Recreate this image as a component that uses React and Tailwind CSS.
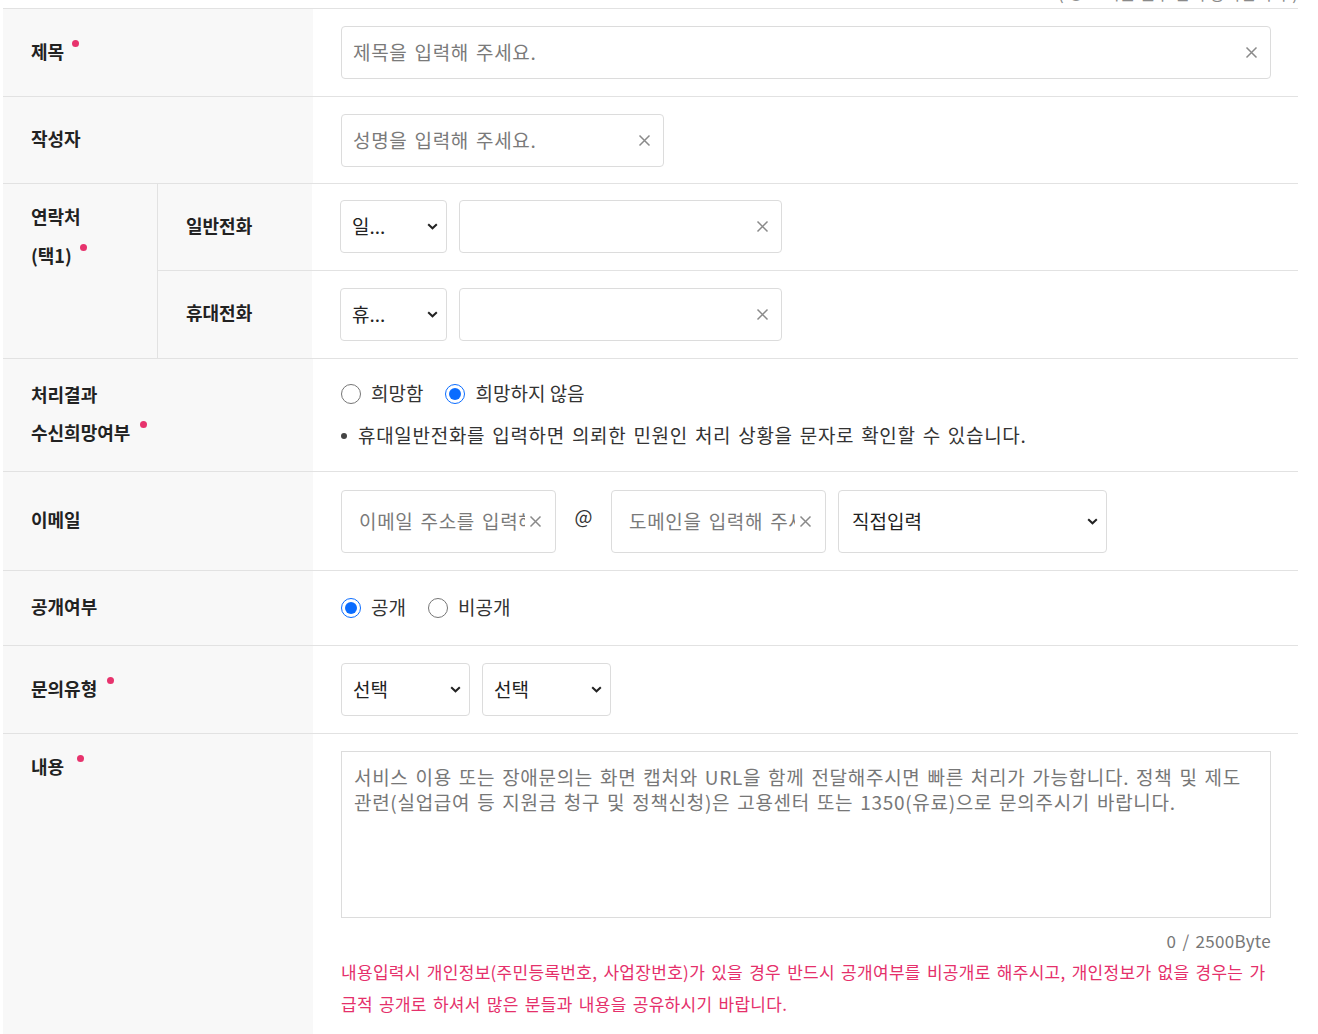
import React from 'react';

const FONT = "font-['Noto_Sans_CJK_KR','Noto_Sans',sans-serif]";

function Dot({ gap = 'ml-[8px]' }) {
  return <span className={`${gap} mt-[8px] inline-block h-[7px] w-[7px] rounded-full bg-[#e7336d] align-top`} />;
}

function ClearIcon() {
  return (
    <svg width="13" height="13" viewBox="0 0 13 13" className="shrink-0">
      <path d="M1.5 1.5 L11.5 11.5 M11.5 1.5 L1.5 11.5" stroke="#8a8a8a" strokeWidth="1.5" fill="none" />
    </svg>
  );
}

function Chevron() {
  return (
    <svg width="11" height="7" viewBox="0 0 11 7" className="shrink-0">
      <path d="M1.2 1.2 L5.5 5.3 L9.8 1.2" stroke="#222" strokeWidth="2" fill="none" />
    </svg>
  );
}

// text input with a clear button on the right
function ClearInput({ placeholder, width, tall }) {
  return (
    <div
      className={`flex items-center rounded-[4px] border border-[#dcdcdc] bg-white ${
        tall ? 'h-[63px] pl-[17px] pr-[13px]' : 'h-[53px] pl-[11px] pr-[12px]'
      } ${width}`}
    >
      <input
        type="text"
        placeholder={placeholder}
        className="min-w-0 flex-1 bg-transparent text-[19px] tracking-[0.7px] text-[#222] outline-none [word-spacing:2px] placeholder:text-[#7a7a7a]"
      />
      <span className={tall ? 'ml-[4px]' : 'ml-[8px]'}>
        <ClearIcon />
      </span>
    </div>
  );
}

function Select({ label, width, tall }) {
  return (
    <div
      className={`flex items-center justify-between rounded-[4px] border border-[#dcdcdc] bg-white pr-[8px] text-[19px] text-[#222] ${
        tall ? 'h-[63px] pl-[13px]' : 'h-[53px] pl-[11px]'
      } ${width}`}
    >
      <span className="truncate">{label}</span>
      <Chevron />
    </div>
  );
}

function Radio({ name, label, checked }) {
  return (
    <label className="flex items-center gap-[10px] text-[19px] text-[#333]">
      <input type="radio" name={name} defaultChecked={checked} className="m-0 h-[20px] w-[20px] accent-[#0a6cff]" />
      <span className="-mt-[2px]">{label}</span>
    </label>
  );
}

function Row({ label, required, dotGap, top, children, contentClass = '' }) {
  return (
    <div className="flex border-b border-[#e2e2e2]">
      <div
        className={`flex w-[310px] shrink-0 bg-[#f8f8f8] px-[28px] text-[18px] font-semibold leading-[38px] text-[#222] ${
          top ? 'items-start pt-[17px]' : 'items-center'
        }`}
      >
        <div className="-mt-[4px]">
          {label}
          {required && <Dot gap={dotGap} />}
        </div>
      </div>
      <div className={`min-w-0 flex-1 pl-[28px] pr-[27px] ${contentClass}`}>{children}</div>
    </div>
  );
}

export default function App() {
  return (
    <div className={`min-h-screen bg-white ${FONT}`}>
      <div className="ml-[3px] w-[1295px]">
        {/* cut-off notice above the table */}
        <div className="h-[8px] overflow-hidden">
          <p className="-mt-[20px] text-right text-[17px] leading-[26px] text-[#8a8a8a]">( ● 표시는 필수 입력 항목입니다.)</p>
        </div>

        <div className="border-t border-[#e2e2e2]">
          <Row label="제목" required contentClass="py-[17px]">
            <ClearInput placeholder="제목을 입력해 주세요." width="w-full" />
          </Row>

          <Row label="작성자" contentClass="pt-[17px] pb-[16px]">
            <ClearInput placeholder="성명을 입력해 주세요." width="w-[323px]" />
          </Row>

          {/* contact: two sub rows */}
          <div className="flex border-b border-[#e2e2e2]">
            <div className="w-[155px] shrink-0 border-r border-[#e2e2e2] bg-[#f8f8f8] px-[28px] pt-[13px] text-[18px] font-semibold leading-[39px] text-[#222]">
              <div>연락처</div>
              <div>
                (택1)
                <Dot />
              </div>
            </div>
            <div className="flex-1">
              <div className="flex border-b border-[#e2e2e2]">
                <div className="flex w-[154px] shrink-0 items-center bg-[#f8f8f8] px-[28px] pb-[4px] text-[18px] font-semibold text-[#222]">
                  일반전화
                </div>
                <div className="flex flex-1 gap-[12px] pl-[28px] pr-[27px] pt-[16px] pb-[17px]">
                  <Select label="일..." width="w-[107px]" />
                  <ClearInput placeholder="" width="w-[323px]" />
                </div>
              </div>
              <div className="flex">
                <div className="flex w-[154px] shrink-0 items-center bg-[#f8f8f8] px-[28px] pb-[4px] text-[18px] font-semibold text-[#222]">
                  휴대전화
                </div>
                <div className="flex flex-1 gap-[12px] pl-[28px] pr-[27px] py-[17px]">
                  <Select label="휴..." width="w-[107px]" />
                  <ClearInput placeholder="" width="w-[323px]" />
                </div>
              </div>
            </div>
          </div>

          <Row label={<><div>처리결과</div><div>수신희망여부<Dot gap="ml-[10px]" /></div></>} contentClass="pt-[20px] pb-[20px]">
            <div className="flex h-[30px] items-center gap-[22px]">
              <Radio name="reply" label="희망함" />
              <Radio name="reply" label="희망하지 않음" checked />
            </div>
            <div className="mt-[12px] flex h-[30px] items-center text-[19px] tracking-[0.7px] text-[#333] [word-spacing:2px]">
              <span className="mr-[11px] inline-block h-[6px] w-[6px] rounded-full bg-[#444]" />
              <span className="-mt-[2px]">휴대일반전화를 입력하면 의뢰한 민원인 처리 상황을 문자로 확인할 수 있습니다.</span>
            </div>
          </Row>

          <Row label="이메일" contentClass="pt-[18px] pb-[17px]">
            <div className="flex items-start">
              <ClearInput placeholder="이메일 주소를 입력해 주세요." width="w-[215px]" tall />
              <span className="w-[55px] pt-[12px] text-center text-[19px] text-[#333]">@</span>
              <ClearInput placeholder="도메인을 입력해 주세요." width="w-[215px]" tall />
              <div className="ml-[12px]">
                <Select label="직접입력" width="w-[269px]" tall />
              </div>
            </div>
          </Row>

          <Row label="공개여부" contentClass="py-[22px]">
            <div className="flex h-[30px] items-center gap-[22px]">
              <Radio name="open" label="공개" checked />
              <Radio name="open" label="비공개" />
            </div>
          </Row>

          <Row label="문의유형" required dotGap="ml-[10px]" contentClass="py-[17px]">
            <div className="flex gap-[12px]">
              <Select label="선택" width="w-[129px]" />
              <Select label="선택" width="w-[129px]" />
            </div>
          </Row>

          <Row label="내용" required dotGap="ml-[13px]" top contentClass="pt-[17px] pb-[14px]">
            <textarea
              placeholder="서비스 이용 또는 장애문의는 화면 캡처와 URL을 함께 전달해주시면 빠른 처리가 가능합니다. 정책 및 제도 관련(실업급여 등 지원금 청구 및 정책신청)은 고용센터 또는 1350(유료)으로 문의주시기 바랍니다."
              className="block h-[167px] w-full resize-none border border-[#dcdcdc] px-[12px] pt-[12px] text-[19px] leading-[25px] tracking-[0.7px] text-[#222] outline-none [word-spacing:2px] placeholder:text-[#777]"
            />
            <p className="mt-[8px] text-right text-[17px] leading-[30px] tracking-[0.3px] text-[#777] [word-spacing:2px]">0 / 2500Byte</p>
            <p className="text-[17px] leading-[32px] tracking-[0.3px] text-[#e5306b] [word-spacing:2px]">
              내용입력시 개인정보(주민등록번호, 사업장번호)가 있을 경우 반드시 공개여부를 비공개로 해주시고, 개인정보가 없을 경우는 가급적 공개로 하셔서 많은 분들과 내용을 공유하시기 바랍니다.
            </p>
          </Row>
        </div>
      </div>
    </div>
  );
}
